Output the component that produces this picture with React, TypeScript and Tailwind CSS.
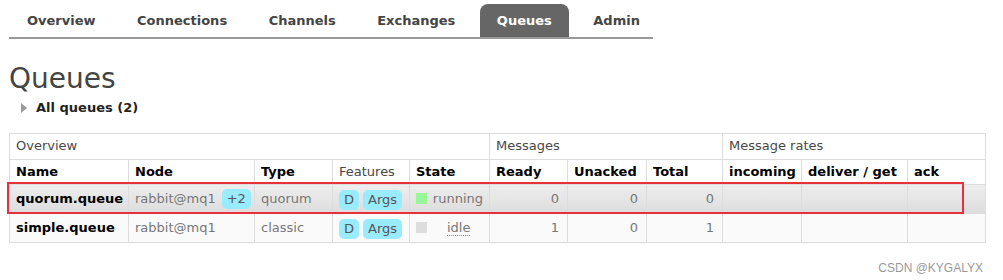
import React from 'react'

const tabs = ['Overview', 'Connections', 'Channels', 'Exchanges', 'Queues', 'Admin']

const cols = [
  { label: 'Name', w: 119 },
  { label: 'Node', w: 126 },
  { label: 'Type', w: 78 },
  { label: 'Features', w: 77, normal: true },
  { label: 'State', w: 80 },
  { label: 'Ready', w: 78 },
  { label: 'Unacked', w: 79 },
  { label: 'Total', w: 76 },
  { label: 'incoming', w: 79 },
  { label: 'deliver / get', w: 106 },
  { label: 'ack', w: 78 },
]

type Row = {
  name: string
  extra?: string
  type: string
  state: 'running' | 'idle'
  ready: number
  unacked: number
  total: number
}

const rows: Row[] = [
  { name: 'quorum.queue', extra: '+2', type: 'quorum', state: 'running', ready: 0, unacked: 0, total: 0 },
  { name: 'simple.queue', type: 'classic', state: 'idle', ready: 1, unacked: 0, total: 1 },
]

function Badge({ children }: { children: React.ReactNode }) {
  return (
    <span className="inline-block rounded-[5px] bg-[#99ebff] px-[5px] leading-[20px] text-[#555]">
      {children}
    </span>
  )
}

export default function App() {
  return (
    <div
      className="relative h-[280px] w-[1003px] overflow-hidden bg-white text-[13px] text-[#484848]"
      style={{ fontFamily: '"DejaVu Sans", Verdana, sans-serif' }}
    >
      {/* Tabs */}
      <div className="ml-[9px] mt-[4px] flex w-[644px] border-b-2 border-[#999] pl-[1px]">
        {tabs.map((t) => (
          <div
            key={t}
            className={`mr-[7.5px] rounded-t-[8px] px-[17px] text-[13px] font-bold leading-[33px] ${
              t === 'Queues' ? 'bg-[#666] text-white' : 'text-[#444]'
            }`}
          >
            {t}
          </div>
        ))}
      </div>

      {/* Heading */}
      <h1 className="ml-[9px] mt-[23px] text-[28px] font-normal leading-[34px] text-[#444]">Queues</h1>
      <div className="ml-[21px] mt-[2px] flex items-center gap-[9px] text-[13px] font-bold text-[#222]">
        <span className="inline-block h-0 w-0 border-y-[5px] border-l-[6px] border-y-transparent border-l-[#999]" />
        All queues (2)
      </div>

      {/* Table */}
      <table className="ml-[9px] mt-[15px] w-[976px] table-fixed border-collapse border border-[#ccc] text-[13px] whitespace-nowrap">
        <colgroup>
          {cols.map((c) => (
            <col key={c.label} style={{ width: c.w }} />
          ))}
        </colgroup>
        <thead>
          <tr className="h-[26px]">
            <th colSpan={5} className="border border-[#ddd] px-[6px] text-left font-normal text-[#484848]">
              Overview
            </th>
            <th colSpan={3} className="border border-[#ddd] px-[6px] text-left font-normal text-[#484848]">
              Messages
            </th>
            <th colSpan={3} className="border border-[#ddd] px-[6px] text-left font-normal text-[#484848]">
              Message rates
            </th>
          </tr>
          <tr className="h-[25px]">
            {cols.map((c) => (
              <th
                key={c.label}
                className={`border border-[#ddd] px-[6px] text-left ${
                  c.normal ? 'font-normal text-[#484848]' : 'font-bold text-black'
                }`}
              >
                {c.label}
              </th>
            ))}
          </tr>
        </thead>
        <tbody>
          {rows.map((r, i) => (
            <tr
              key={r.name}
              className={`h-[29px] ${i === 0 ? 'bg-gradient-to-b from-[#eee] to-[#ddd]' : 'bg-[#fafafa]'}`}
            >
              <td className="border border-[#ddd] px-[6px] font-bold text-black">{r.name}</td>
              <td className="border border-[#ddd] px-[6px] text-[#777]">
                rabbit@mq1
                {r.extra && (
                  <span className="ml-[6px]">
                    <Badge>{r.extra}</Badge>
                  </span>
                )}
              </td>
              <td className="border border-[#ddd] px-[6px] text-[#777]">{r.type}</td>
              <td className="border border-[#ddd] px-[6px] pt-[3px]">
                <div className="flex gap-[4px]">
                  <Badge>D</Badge>
                  <Badge>Args</Badge>
                </div>
              </td>
              <td className="border border-[#ddd] px-[6px] text-[#777]">
                <div className="flex items-center">
                  <span
                    className={`mr-[6px] inline-block h-[11px] w-[11px] ${
                      r.state === 'running' ? 'bg-[#98f598]' : 'bg-[#ddd]'
                    }`}
                  />
                  {r.state === 'running' ? (
                    'running'
                  ) : (
                    <span className="ml-[14px] border-b border-dotted border-[#888] leading-[15px]">idle</span>
                  )}
                </div>
              </td>
              <td className="border border-[#ddd] px-[8px] text-right text-[#777]">{r.ready}</td>
              <td className="border border-[#ddd] px-[8px] text-right text-[#777]">{r.unacked}</td>
              <td className="border border-[#ddd] px-[8px] text-right text-[#777]">{r.total}</td>
              <td className="border border-[#ddd]" />
              <td className="border border-[#ddd]" />
              <td className="border border-[#ddd]" />
            </tr>
          ))}
        </tbody>
      </table>

      {/* annotation box around the quorum row */}
      <div className="absolute left-[7px] top-[182px] h-[32px] w-[957px] border-2 border-[#e8303a]" />

      <div
        className="absolute right-[20px] top-[259px] text-[12px] text-[#999]"
        style={{ fontFamily: '"Liberation Sans", Arial, sans-serif' }}
      >
        CSDN @KYGALYX
      </div>
    </div>
  )
}
